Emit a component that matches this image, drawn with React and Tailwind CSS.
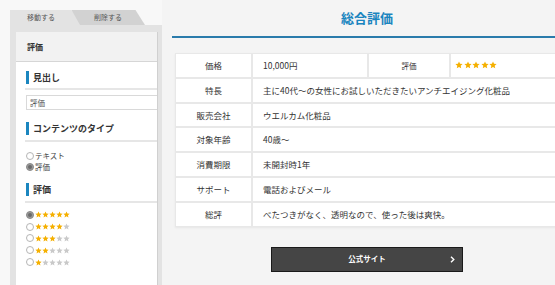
import React from "react";

const FONT = { fontFamily: '"Noto Sans CJK JP", "Noto Sans", sans-serif' };

function Star({ on, size = 7 }) {
  return (
    <svg width={size} height={size} viewBox="0 0 24 24" className="shrink-0">
      <polygon
        points="12,1.5 15.1,8.6 22.8,9.3 17,14.4 18.7,22 12,18 5.3,22 7,14.4 1.2,9.3 8.9,8.6"
        fill={on ? "#f5b000" : "#c9c9c9"}
      />
    </svg>
  );
}

function Radio({ checked }) {
  return checked ? (
    <span className="w-[8px] h-[8px] rounded-full border border-[#8a8a8a] bg-[#9a9a9a] flex items-center justify-center shrink-0">
      <span className="w-[4px] h-[4px] rounded-full bg-[#6a6a6a]" />
    </span>
  ) : (
    <span className="w-[8px] h-[8px] rounded-full border border-[#b5b5b5] bg-white shrink-0" />
  );
}

function Heading({ children }) {
  return (
    <div className="flex items-center h-[13px]">
      <span className="w-[3px] h-[13px] bg-[#1b86bf]" />
      <span className="ml-[4px] text-[9px] font-bold text-[#333] leading-none">{children}</span>
    </div>
  );
}

function Row({ label, children }) {
  return (
    <div className="flex gap-[2px] h-[22.8px]">
      <div className="w-[75px] shrink-0 bg-white flex items-center justify-center text-[8.5px] text-[#333]">
        {label}
      </div>
      <div className="flex-1 bg-white flex items-center pl-[10px] text-[8.5px] text-[#333] whitespace-nowrap">
        {children}
      </div>
    </div>
  );
}

export default function App() {
  const rows = [
    ["特長", "主に40代〜の女性にお試しいただきたいアンチエイジング化粧品"],
    ["販売会社", "ウエルカム化粧品"],
    ["対象年齢", "40歳〜"],
    ["消費期限", "未開封時1年"],
    ["サポート", "電話およびメール"],
    ["総評", "べたつきがなく、透明なので、使った後は爽快。"],
  ];
  return (
    <div style={FONT} className="w-[555px] h-[285px] overflow-hidden flex bg-[#f4f4f4]">
      {/* Left panel */}
      <div className="w-[162px] shrink-0 bg-[#f8f8f8] pl-[10px] pt-[10px] flex flex-col">
        <div className="flex h-[15px]">
          <div className="relative z-10 w-[70px] bg-[#e3e3e3] [clip-path:polygon(0_0,88%_0,100%_100%,0_100%)] flex items-center pl-[17px] text-[7px] text-[#555]">
            移動する
          </div>
          <div className="-ml-[8px] w-[73px] bg-[#d2d2d2] [clip-path:polygon(0_0,87%_0,100%_100%,0_100%)] flex items-center pl-[22px] text-[7px] text-[#555]">
            削除する
          </div>
        </div>
        <div className="flex-1 bg-[#e3e3e3] pt-[7px] pl-[6px] pr-[4px] flex flex-col">
          <div className="flex-1 bg-white flex flex-col overflow-hidden border-r border-[#d0d0d0]">
            <div className="h-[30px] shrink-0 bg-[#f2f2f2] border-b border-[#d6d6d6] flex items-center pl-[11px] text-[8px] font-bold text-[#333]">
              評価
            </div>
            <div className="pl-[10px] flex flex-col">
              <div className="mt-[9px]">
                <Heading>見出し</Heading>
              </div>
              <div className="mt-[4px] h-[2px] bg-[#e6e6e6] -ml-[1px]" />
              <div className="mt-[5px] h-[15px] w-[150px] border border-[#d9d9d9] bg-white flex items-center pl-[3px] text-[7.5px] text-[#555]">
                評価
              </div>
              <div className="mt-[12px]">
                <Heading>コンテンツのタイプ</Heading>
              </div>
              <div className="mt-[5px] h-[2px] bg-[#e6e6e6] -ml-[1px]" />
              <div className="mt-[8px] h-[11px] flex items-center gap-[1px] text-[7.5px] text-[#444]">
                <Radio />
                <span>テキスト</span>
              </div>
              <div className="h-[11px] flex items-center gap-[1px] text-[7.5px] text-[#444]">
                <Radio checked />
                <span>評価</span>
              </div>
              <div className="mt-[11px]">
                <Heading>評価</Heading>
              </div>
              <div className="mt-[5px] h-[2px] bg-[#e6e6e6] -ml-[1px]" />
              <div className="mt-[6px] flex flex-col">
                {[5, 4, 3, 2, 1].map((n, i) => (
                  <div key={n} className="h-[11.8px] flex items-center gap-[1px]">
                    <Radio checked={i === 0} />
                    <div className="flex">
                      {[0, 1, 2, 3, 4].map((k) => (
                        <Star key={k} on={k < n} />
                      ))}
                    </div>
                  </div>
                ))}
              </div>
            </div>
          </div>
        </div>
      </div>

      {/* Right area */}
      <div className="flex-1 pl-[10px]">
        <div className="w-[390px] shrink-0 flex flex-col">
          <div className="h-[36px] flex items-center justify-center text-[13px] font-bold text-[#1a85bf]">
            総合評価
          </div>
          <div className="h-[2px] bg-[#2a7bab]" />
          <div className="mt-[15px] mx-[3px] bg-[#e8e8e8] p-[1px] flex flex-col gap-[2px] shadow-[0_1px_2px_rgba(0,0,0,0.06)]">
            <div className="flex gap-[2px] h-[22.8px]">
              <div className="w-[75px] shrink-0 bg-white flex items-center justify-center text-[8.5px] text-[#333]">
                価格
              </div>
              <div className="w-[114px] shrink-0 bg-white flex items-center pl-[10px] text-[8.5px] text-[#333]">
                10,000円
              </div>
              <div className="w-[80px] shrink-0 bg-white flex items-center justify-center text-[7.5px] text-[#333]">
                評価
              </div>
              <div className="flex-1 bg-white flex items-center pl-[4px] gap-[0.5px]">
                {[0, 1, 2, 3, 4].map((k) => (
                  <Star key={k} on size={8} />
                ))}
              </div>
            </div>
            {rows.map(([l, v]) => (
              <Row key={l} label={l}>
                {v}
              </Row>
            ))}
          </div>
          <div className="mt-[20px] mx-auto w-[192px] h-[25px] bg-[#454545] border border-[#1a1a1a] grid grid-cols-[1fr_auto_1fr] items-center text-white">
            <span />
            <span className="text-[7.5px] font-bold">公式サイト</span>
            <span className="flex justify-end pr-[7px]">
              <svg width="5" height="7" viewBox="0 0 5 7">
                <path d="M1 0.8 L3.8 3.5 L1 6.2" fill="none" stroke="white" strokeWidth="1.4" />
              </svg>
            </span>
          </div>
        </div>
      </div>
    </div>
  );
}
